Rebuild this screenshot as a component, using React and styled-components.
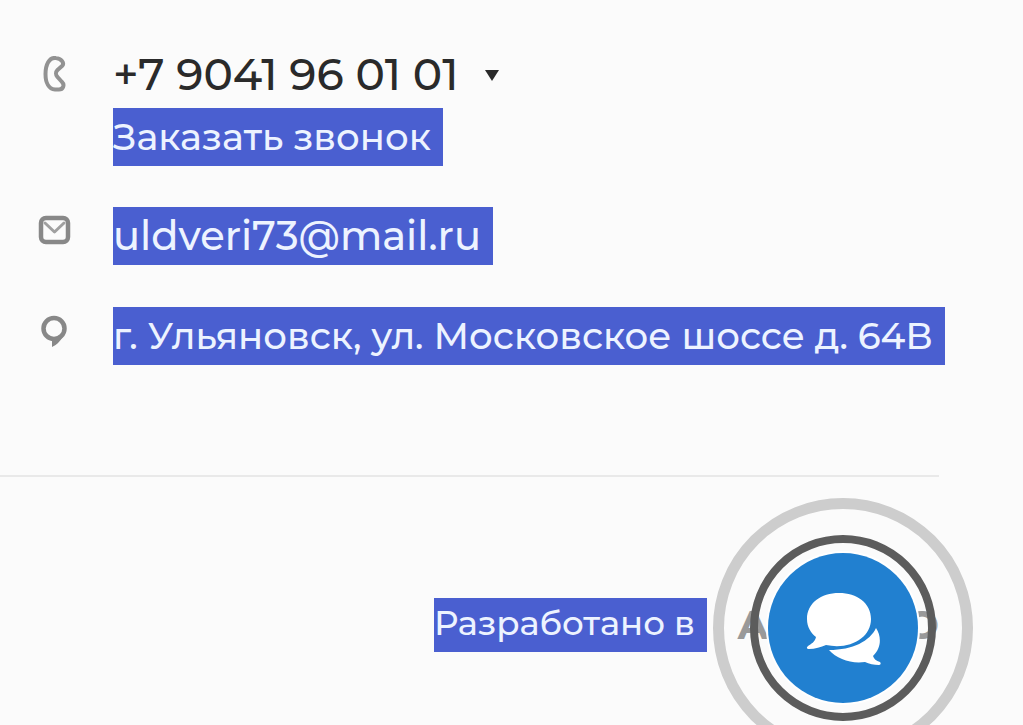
import React from "react";
import styled, { createGlobalStyle } from "styled-components";

const GlobalStyle = createGlobalStyle`
  * { box-sizing: border-box; }
  body {
    margin: 0;
    background: #fbfbfb;
    color: #2a2a2a;
    font-family: Montserrat, Inter, "Open Sans", sans-serif;
    overflow-x: hidden;
  }
`;

const Footer = styled.footer`
  min-height: 100vh;
  padding: 44px 76px 0 0;
`;

const Contacts = styled.address`
  display: flex;
  flex-direction: column;
  font-style: normal;
  padding-left: 36px;
`;

const Row = styled.div`
  display: grid;
  grid-template-columns: 36px minmax(0, 1fr);
  column-gap: 41px;
  margin-bottom: ${(p) => p.$gap || 0}px;
`;

const RowIcon = styled.svg`
  width: 36px;
  height: 36px;
  margin-top: ${(p) => p.$top || 6}px;
  fill: none;
  stroke: ${(p) => p.$tone || "#888888"};
  stroke-width: 4;
  stroke-linejoin: round;
  stroke-linecap: round;
`;

const Lines = styled.div`
  display: flex;
  flex-direction: column;
  align-items: flex-start;
`;

const PhoneLine = styled.div`
  display: flex;
  align-items: center;
  gap: 26px;
  height: 60px;
  margin-bottom: 4px;
`;

const Phone = styled.a`
  color: #2a2a2a;
  font-size: 44px;
  font-weight: 500;
  line-height: 60px;
  text-decoration: none;
  white-space: nowrap;
`;

const Toggle = styled.button`
  display: flex;
  padding: 2px 0 0;
  border: 0;
  background: none;
  cursor: pointer;
`;

const Selected = styled.a`
  display: inline-block;
  padding: 0 12px ${(p) => p.$below || 0}px 0;
  background: #4a5fd0;
  color: #edf3ff;
  font-size: ${(p) => p.$size || 37}px;
  font-weight: 500;
  line-height: ${(p) => p.$line || 58}px;
  text-decoration: none;
  white-space: nowrap;
`;

const Divider = styled.hr`
  height: 2px;
  margin: 110px 8px 0 0;
  border: 0;
  background: #e9e9e9;
`;

const Credits = styled.div`
  display: flex;
  justify-content: flex-end;
  align-items: center;
  gap: 30px;
  margin: 121px 8px 0 0;
`;

const Brand = styled.span`
  display: flex;
  justify-content: space-between;
  width: 202px;
  color: #999999;
  font-size: 40px;
  font-weight: 700;
  line-height: 54px;
`;

const ChatPulse = styled.div`
  position: fixed;
  right: 50px;
  bottom: -33px;
  display: grid;
  place-items: center;
  width: 260px;
  height: 260px;
  border: 11px solid #cdcdcd;
  border-radius: 50%;
`;

const ChatRing = styled.div`
  display: grid;
  place-items: center;
  width: 186px;
  height: 186px;
  border: 8px solid #5c5c5c;
  border-radius: 50%;
`;

const ChatButton = styled.button`
  display: grid;
  place-items: center;
  width: 150px;
  height: 150px;
  padding: 0;
  border: 0;
  border-radius: 50%;
  background: #2180d0;
  box-shadow: 0 0 0 2px #ffffff;
  cursor: pointer;
`;

export default function App() {
  return (
    <>
      <GlobalStyle />
      <Footer>
        <Contacts>
          <Row $gap={41}>
            <RowIcon viewBox="0 0 36 36" $top={12} $tone="#929292" aria-hidden="true">
              <path d="M20 2C13 1 9.500 9 9.500 18S13 33 19 33.500H23C27 33.500 29 29 26 26L21.500 21C19.500 19 19.500 16 21.500 14L26 10C29 7 25 2.500 20 2Z" />
            </RowIcon>
            <Lines>
              <PhoneLine>
                <Phone href="tel:+79041960101">+7 9041 96 01 01</Phone>
                <Toggle aria-label="Другие телефоны">
                  <svg width="14" height="11" viewBox="0 0 14 11">
                    <path d="M0 0h14L7 11Z" fill="#2a2a2a" />
                  </svg>
                </Toggle>
              </PhoneLine>
              <Selected href="#call">Заказать звонок</Selected>
            </Lines>
          </Row>
          <Row $gap={42}>
            <RowIcon viewBox="0 0 36 36" aria-hidden="true">
              <rect x="5" y="5" width="27" height="24" rx="5" strokeWidth="4.500" />
              <path d="m9 10 9.500 9L28 10" strokeWidth="3" stroke="#a0a0a0" />
            </RowIcon>
            <Lines>
              <Selected href="mailto:uldveri73@mail.ru" $size={40}>uldveri73@mail.ru</Selected>
            </Lines>
          </Row>
          <Row>
            <RowIcon viewBox="0 0 36 36" aria-hidden="true">
              <circle cx="18" cy="15.500" r="10.500" strokeWidth="4.500" />
              <path d="M16 26v8q7-3 11-11" fill="#888888" stroke="none" />
              <path d="M17 27v5l5-5Z" fill="#888888" strokeWidth="2" />
            </RowIcon>
            <Lines>
              <Selected href="#map">г. Ульяновск, ул. Московское шоссе д. 64В</Selected>
            </Lines>
          </Row>
        </Contacts>
        <Divider />
        <Credits>
          <Selected as="span" $size={34} $line={50} $below={4}>Разработано в</Selected>
          <Brand>
            <span>А</span>
            <span>О</span>
          </Brand>
        </Credits>
      </Footer>
      <ChatPulse>
        <ChatRing>
          <ChatButton aria-label="Открыть чат">
            <svg width="76" height="76" viewBox="0 0 76 76" fill="#ffffff" aria-hidden="true">
              <path d="M34 3C16 3 2 13 2 29c0 8 4 14 9 18-1 5-5 7-8 9-2 2-1 3 1 3 6 0 12-2 17-4 24 5 45-7 45-26C66 13 52 3 34 3Z" />
              <path d="M71 38c-6 13-23 22-47 22 8 9 22 14 36 12 4 2 9 3 14 3 2 0 2-2 1-3-4-1-6-3-7-6 8-7 9-19 3-28Z" />
            </svg>
          </ChatButton>
        </ChatRing>
      </ChatPulse>
    </>
  );
}
